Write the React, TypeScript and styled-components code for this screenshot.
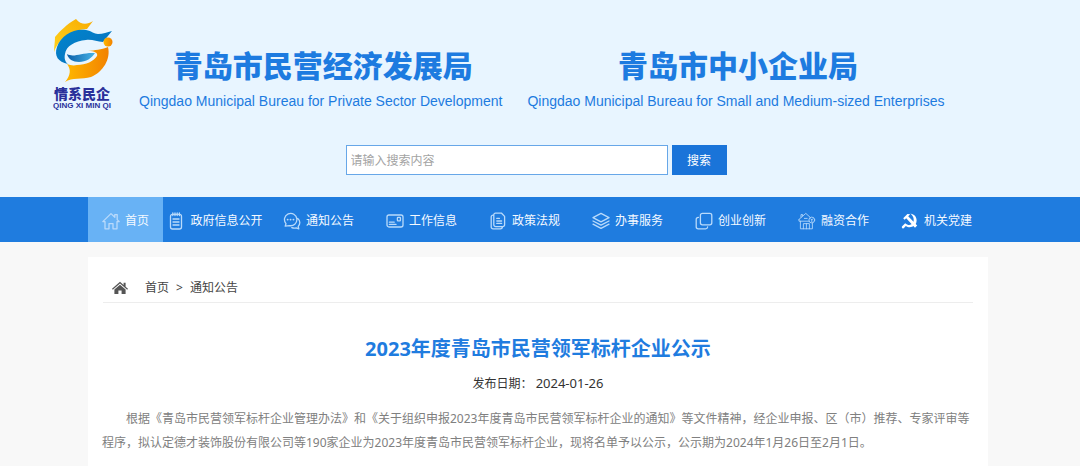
import React from 'react';
import styled, { createGlobalStyle } from 'styled-components';

const GlobalStyle = createGlobalStyle`
  * { box-sizing: border-box; }
  body {
    margin: 0;
    background: #f8f8f8;
    font: 12px/24px "Noto Sans", "Noto Sans CJK SC", sans-serif;
    color: #333;
  }
  h1, h2, p, ul { margin: 0; padding: 0; }
  a { color: inherit; text-decoration: none; }
`;

const Header = styled.header`
  background: #e8f5ff;
  padding: 17px 0 22px;
`;

const Brand = styled.div`
  display: flex;
  align-items: flex-start;
  padding-left: 50px;
`;

const LogoBox = styled.div`
  width: 64px;
  margin-right: 25px;
  display: flex;
  flex-direction: column;
  align-items: center;
  color: #29309a;
  white-space: nowrap;
`;

const LogoName = styled.span`
  font: 900 14px/18px "Noto Sans CJK SC", sans-serif;
`;

const LogoPinyin = styled.span`
  font: bold 8px/8px "Liberation Sans", sans-serif;
`;

const Bureau = styled.div`
  color: #1d7be0;
  text-align: center;
  white-space: nowrap;
  padding-top: 26px;
  margin-right: 25px;
`;

const BureauName = styled.h1`
  font: 900 30px/42px "Noto Sans CJK SC", sans-serif;
  padding-left: 4px;
`;

const BureauEnglish = styled.p`
  font: 14px/32px "Liberation Sans", sans-serif;
`;

const Search = styled.form`
  display: flex;
  justify-content: center;
  gap: 4px;
  margin-top: 28px;
  padding-right: 8px;
`;

const SearchInput = styled.input`
  width: 322px;
  height: 30px;
  padding: 0 4px;
  border: 1px solid #67a7e8;
  border-radius: 0;
  background: #fff;
  font: inherit;
  outline: none;
  &::placeholder { color: #a3a3a3; opacity: 1; }
`;

const SearchButton = styled.button`
  width: 55px;
  height: 30px;
  padding: 1px 0 0;
  border: 0;
  background: #1a74d9;
  color: #fff;
  font: inherit;
`;

const NavBar = styled.nav`
  background: #1f7cdf;
  padding: 0 92px 0 88px;
`;

const NavList = styled.ul`
  display: flex;
  list-style: none;
`;

const NavItem = styled.li<{ $grow: number; $active?: boolean }>`
  flex: ${(p) => p.$grow} 1 0;
  background: ${(p) => (p.$active ? '#68b2f5' : 'transparent')};
`;

const NavLink = styled.a`
  display: flex;
  align-items: center;
  justify-content: center;
  gap: 5px;
  height: 45px;
  padding-top: 2px;
  color: #f4f9ff;
  white-space: nowrap;
`;

const NavIcon = styled.svg`
  flex: none;
  width: 18px;
  height: 18px;
  fill: none;
  stroke: #b9dafb;
  stroke-width: 1.3;
  stroke-linecap: round;
  stroke-linejoin: round;
`;

const Main = styled.main`
  margin: 15px 92px 0 88px;
  padding: 15px;
  background: #fff;
  min-height: 220px;
`;

const Breadcrumb = styled.nav`
  display: flex;
  align-items: center;
  gap: 7px;
  height: 31px;
  padding: 2px 0 0 9px;
  border-bottom: 1px solid #ededed;
  color: #444;
`;

const HomeGlyph = styled.svg`
  width: 16px;
  height: 14px;
  margin-right: 10px;
`;

const Title = styled.h2`
  margin-top: 30px;
  font-size: 20px;
  line-height: 32px;
  font-weight: bold;
  text-align: center;
  color: #1f7cdf;
`;

const PublishDate = styled.p`
  margin-top: 7px;
  text-align: center;
  white-space: pre;

  time {
    font-size: 13px;
    line-height: 16px;
  }
`;

const Body = styled.p`
  margin: 11px 0 0 -1px;
  text-indent: 24px;
  color: #808080;
`;

const navItems = [
  {
    label: '首页', grow: 75, active: true,
    icon: <path d="M.8 9.6 9 1.6l3.8 3.6V2.6h2.4v5l2 2H15v7.2h-4v-5.2H7v5.2H3V9.6z" />,
  },
  {
    label: '政府信息公开', grow: 104,
    icon: <g><rect x="3.5" y="2.4" width="11" height="14.6" rx="2" /><path d="M5.8 1v2.6M8 1v2.6M10.2 1v2.6M12.4 1v2.6M6 7h6M6 10h6M6 13h6" /></g>,
  },
  {
    label: '通知公告', grow: 103,
    icon: <g><path d="M2.2 14.2 3 11.6A6.2 6.2 0 1 1 6.4 13.6zM14.8 6.4a5.4 5.4 0 0 1 .4 8l.6 2.4-2.6-1a6 6 0 0 1-4.4-.2" /><path strokeWidth="1.8" d="M4.6 7.6h.1M7.5 7.6h.1M10.4 7.6h.1" /></g>,
  },
  {
    label: '工作信息', grow: 103,
    icon: <g><rect x="1" y="3" width="16" height="12" rx="2" /><rect x="11.4" y="5.4" width="3" height="3.4" rx=".6" /><path d="M3.4 10.2h4.8M3.4 12.4h6.6" /></g>,
  },
  {
    label: '政策法规', grow: 103,
    icon: <g><path d="M6.4 1.2h6.2l3 3.2v8.4a1.8 1.8 0 0 1-1.8 1.8H6.6a1.8 1.8 0 0 1-1.8-1.8V2.8a1.6 1.6 0 0 1 1.6-1.6zM4.8 3.2H4a1.8 1.8 0 0 0-1.8 1.8v10A1.8 1.8 0 0 0 4 16.8h7.4a2 2 0 0 0 2-2" /><path d="M7.8 6.4h2.6M7.8 9h4.8M7.8 11.4h4.8" /></g>,
  },
  {
    label: '办事服务', grow: 103,
    icon: <path d="M9 1.4 17 5.6 9 9.8 1 5.6zM1 9l8 4.2L17 9M1 12.2l8 4.2 8-4.2" />,
  },
  {
    label: '创业创新', grow: 103,
    icon: <g><rect x="5.4" y="1.4" width="11.4" height="11.4" rx="2" /><path d="M3.4 5.4h-.2a2 2 0 0 0-2 2v7.4a2 2 0 0 0 2 2h7.4a2 2 0 0 0 2-1.8" /></g>,
  },
  {
    label: '融资合作', grow: 103,
    icon: <g strokeWidth="1" strokeOpacity=".85"><path d="M3 5.2V2.6h1.600v1.200M1 7.400l6.800-6 4 3.600M1 7.400v1.800h10M2.400 9.200v7.600h12V11.400M5.400 16.800V11.600h6v5.200M8.400 11.600v5.200M6.400 6.400h2.800" /><circle cx="13.8" cy="8" r="2.9" /><path d="m12.8 6.8 1 1.2 1-1.2M13.8 8v1.8" /></g>,
  },
  {
    label: '机关党建', grow: 103,
    icon: <g fill="#fff" stroke="none"><path d="M9.4 1.4c6.6 1 8.2 8.6 3.8 12.2-2.6 2.2-6.2 2-8.4.4l-1.6 1.8a1.300 1.300 0 1 1-1.800-1.800l2.800-2.800c2.400 2.200 5.400 2.400 7.200.4 2.400-2.800 1.600-7.200-2-10.200z" /><path d="M2.200 6.200 6.400 2l2.800.2-2 2 9 9.400-2.200 2.200-8.800-9.600-1.600 1.600z" /></g>,
  },
];

const Emblem = () => (
  <svg width="64" height="67" viewBox="0 0 64 67" aria-hidden="true">
    <defs>
      <linearGradient id="gold" x1="0" y1="1" x2="1" y2="0">
        <stop offset="0" stopColor="#ffd21c" /><stop offset="1" stopColor="#f8ab00" />
      </linearGradient>
      <linearGradient id="orange" x1="0" y1="0" x2="1" y2="0">
        <stop offset="0" stopColor="#ffb800" /><stop offset="1" stopColor="#f28200" />
      </linearGradient>
      <linearGradient id="azure" x1="0" y1="0" x2="1" y2="1">
        <stop offset="0" stopColor="#0085cf" /><stop offset="1" stopColor="#0a6fb9" />
      </linearGradient>
      <linearGradient id="bowl" x1="0" y1="0" x2="1" y2="0">
        <stop offset="0" stopColor="#0a5fa8" /><stop offset="1" stopColor="#48b4e8" />
      </linearGradient>
    </defs>
    <path fill="url(#gold)" d="M4 35C4 30 5 25 5 20C10 14 17 7 26 2C31 8 37 8 43 4L37 12C24 13 10 19 4 35z" />
    <path fill="url(#azure)" d="M18 47C8 45 4 39 7 30C11 18 24 11 36 13C42 14 44 17 48 17C53 17 57 15 62 14L53 25C47 25 42 22 36 23C25 24 16 29 15 37C14 41 15 45 18 47z" />
    <path fill="url(#bowl)" d="M17 37C24 41 32 35 45 36C42 41 36 45 29 45C23 45 18 42 17 37z" />
    <path fill="url(#orange)" d="M58 30C51 33 45 33 38 34C45 34 48 36 47 39C44 44 36 48 27 48C23 49 20 48 17 47C21 52 21 58 15 65C22 60 32 63 41 60C53 55 61 42 58 30z" />
    <circle cx="58" cy="25" r="4.5" fill="url(#orange)" />
  </svg>
);

export default function App() {
  return (
    <>
      <GlobalStyle />
      <Header>
        <Brand>
          <LogoBox>
            <Emblem />
            <LogoName>情系民企</LogoName>
            <LogoPinyin>QING XI MIN QI</LogoPinyin>
          </LogoBox>
          <Bureau>
            <BureauName>青岛市民营经济发展局</BureauName>
            <BureauEnglish>Qingdao Municipal Bureau for Private Sector Development</BureauEnglish>
          </Bureau>
          <Bureau>
            <BureauName>青岛市中小企业局</BureauName>
            <BureauEnglish>Qingdao Municipal Bureau for Small and Medium-sized Enterprises</BureauEnglish>
          </Bureau>
        </Brand>
        <Search onSubmit={(e) => e.preventDefault()}>
          <SearchInput type="text" aria-label="搜索内容" placeholder="请输入搜索内容" />
          <SearchButton type="submit">搜索</SearchButton>
        </Search>
      </Header>
      <NavBar>
        <NavList>
          {navItems.map((item) => (
            <NavItem key={item.label} $grow={item.grow} $active={item.active}>
              <NavLink href="#">
                <NavIcon viewBox="0 0 18 18" aria-hidden="true">{item.icon}</NavIcon>
                {item.label}
              </NavLink>
            </NavItem>
          ))}
        </NavList>
      </NavBar>
      <Main>
        <Breadcrumb>
          <HomeGlyph viewBox="0 0 16 14" fill="#555" aria-hidden="true">
            <path d="M8 .8 11.6 4V1.8h2v4L16 7.8l-.8.9L8 2.5.8 8.7 0 7.8z" />
            <path d="m8 3.8 5.6 4.8V13H9.6V9.4H6.4V13h-4V8.6z" />
          </HomeGlyph>
          <a href="#">首页</a>
          <span>&gt;</span>
          <a href="#">通知公告</a>
        </Breadcrumb>
        <Title>2023年度青岛市民营领军标杆企业公示</Title>
        <PublishDate>发布日期： <time dateTime="2024-01-26">2024-01-26</time></PublishDate>
        <Body>
          根据《青岛市民营领军标杆企业管理办法》和《关于组织申报2023年度青岛市民营领军标杆企业的通知》等文件精神，经企业申报、区（市）推荐、专家评审等程序，拟认定德才装饰股份有限公司等190家企业为2023年度青岛市民营领军标杆企业，现将名单予以公示，公示期为2024年1月26日至2月1日。
        </Body>
      </Main>
    </>
  );
}
